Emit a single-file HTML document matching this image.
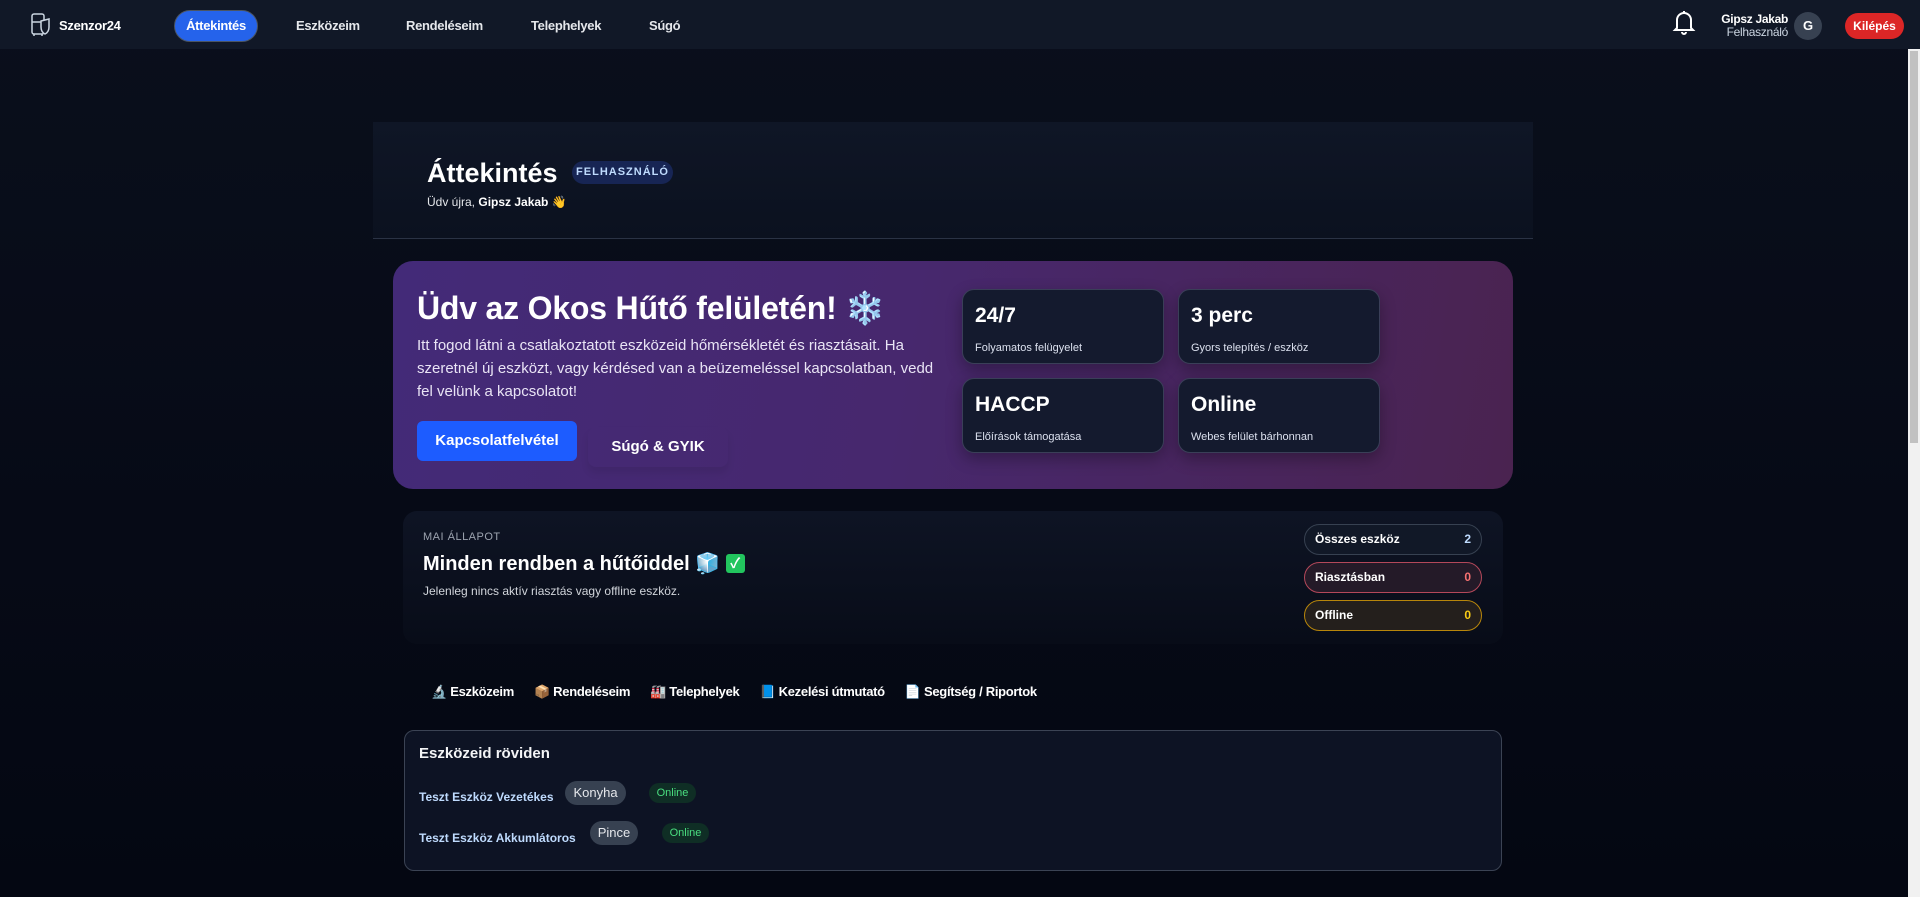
<!DOCTYPE html>
<html><head><meta charset="utf-8"><style>
*{box-sizing:border-box;margin:0;padding:0}
body{width:1920px;height:897px;overflow:hidden;background:linear-gradient(180deg,#0a0f1c 0%,#060a16 60%,#040712 100%);font-family:"Liberation Sans","Noto Sans CJK JP",sans-serif;color:#fff;position:relative}
.nav{position:absolute;left:0;top:0;width:1920px;height:49px;background:#111827}
.nav .t{position:absolute;font-size:13px;font-weight:bold;color:#e5e7eb;top:18px;letter-spacing:-0.3px}
.pill{position:absolute;left:174px;top:10px;width:84px;height:32px;border-radius:16px;background:#2563eb;border:1px solid #4b5563;font-size:13px;font-weight:bold;text-align:center;line-height:30px;letter-spacing:-0.3px}
.scroll{position:absolute;left:1908px;top:49px;width:12px;height:848px;background:#f1f1f1}
.scroll div{position:absolute;left:2px;top:2px;width:8px;height:392px;background:#c1c1c1}
.head{position:absolute;left:373px;top:122px;width:1160px;height:117px;background:linear-gradient(180deg,#0f1626,#0b111f);border-bottom:1px solid #2a3244}
.hero{position:absolute;left:393px;top:261px;width:1120px;height:228px;border-radius:20px;background:linear-gradient(100deg,#432a78 0%,#47286e 45%,#4a2350 100%)}
.card{position:absolute;width:202px;height:75px;border-radius:12px;background:#141a2e;border:1px solid #3a3f58;box-shadow:0 6px 16px rgba(0,0,0,.3)}
.card b{position:absolute;left:12px;top:14px;font-size:21px}
.card span{position:absolute;left:12px;top:52px;font-size:11px;color:#dbe0ee}
.status{position:absolute;left:403px;top:511px;width:1100px;height:133px;border-radius:14px;background:linear-gradient(180deg,#0e1424,#080c18)}
.sp{position:absolute;left:901px;width:178px;height:31px;border-radius:16px;font-size:12px;font-weight:bold;padding:0 10px;line-height:29px}
.sp i{float:right;font-style:normal}
.dev{position:absolute;left:404px;top:730px;width:1098px;height:141px;border-radius:10px;background:#0d1324;border:1px solid #3b4354}
.tag{position:absolute;border-radius:12px;font-size:13px}
</style></head><body>
<div class="nav">
 <svg style="position:absolute;left:30px;top:12px" width="22" height="26" viewBox="0 0 22 26" fill="none" stroke="#cbd5e1" stroke-width="1.5"><rect x="2" y="2" width="12" height="20" rx="2"/><line x1="2" y1="10" x2="14" y2="10"/><path d="M11 9 L19 7 L19 15 Q19 20 15 22 Q11 20 11 15Z" fill="#111827"/><line x1="4" y1="22" x2="4" y2="24"/><line x1="12" y1="22" x2="12" y2="24"/></svg>
 <div class="t" style="left:59px;color:#fff">Szenzor24</div>
 <div class="pill">Áttekintés</div>
 <div class="t" style="left:296px">Eszközeim</div>
 <div class="t" style="left:406px">Rendeléseim</div>
 <div class="t" style="left:531px">Telephelyek</div>
 <div class="t" style="left:649px">Súgó</div>
 <svg style="position:absolute;left:1672px;top:8px" width="24" height="28" viewBox="0 0 24 28" fill="none" stroke="#fff" stroke-width="2"><path d="M5 20 V12 a7 7 0 0 1 14 0 V20 L21 22 H3 Z"/><path d="M10 24 a2 2 0 0 0 4 0"/><line x1="12" y1="3" x2="12" y2="5"/></svg>
 <div style="position:absolute;right:132px;top:13px;text-align:right;font-size:12px;line-height:13px;letter-spacing:-0.3px"><b>Gipsz Jakab</b><br><span style="color:#cbd5e1">Felhasználó</span></div>
 <div style="position:absolute;left:1794px;top:12px;width:28px;height:28px;border-radius:50%;background:#374151;font-size:13px;font-weight:bold;text-align:center;line-height:28px">G</div>
 <div style="position:absolute;left:1845px;top:13px;width:59px;height:26px;border-radius:13px;background:#dc2626;font-size:12px;font-weight:bold;text-align:center;line-height:26px">Kilépés</div>
</div>
<div class="scroll"><div></div></div>
<div class="head">
 <div style="position:absolute;left:54px;top:36px;font-size:27px;font-weight:bold">Áttekintés</div>
 <div style="position:absolute;left:199px;top:39px;width:101px;height:23px;border-radius:12px;background:#172554;color:#bfdbfe;font-size:11px;font-weight:bold;letter-spacing:1px;text-align:center;line-height:23px">FELHASZNÁLÓ</div>
 <div style="position:absolute;left:54px;top:73px;font-size:12px;color:#e5e7eb">Üdv újra, <b style="color:#fff">Gipsz Jakab</b> 👋</div>
</div>
<div class="hero">
 <div style="position:absolute;left:24px;top:28px;font-size:32px;font-weight:bold;letter-spacing:-0.2px">Üdv az Okos Hűtő felületén! <span style="color:#38bdf8">❄️</span></div>
 <div style="position:absolute;left:24px;top:73px;width:520px;font-size:15px;line-height:23px;color:#e9e4f5">Itt fogod látni a csatlakoztatott eszközeid hőmérsékletét és riasztásait. Ha szeretnél új eszközt, vagy kérdésed van a beüzemeléssel kapcsolatban, vedd fel velünk a kapcsolatot!</div>
 <div style="position:absolute;left:24px;top:160px;width:160px;height:40px;border-radius:6px;background:#1d5cff;font-size:15px;font-weight:bold;text-align:center;line-height:40px">Kapcsolatfelvétel</div>
 <div style="position:absolute;left:195px;top:166px;width:140px;height:40px;border-radius:8px;box-shadow:0 6px 8px rgba(0,0,0,.08);font-size:15px;font-weight:bold;text-align:center;line-height:40px">Súgó &amp; GYIK</div>
 <div class="card" style="left:569px;top:28px"><b>24/7</b><span>Folyamatos felügyelet</span></div>
 <div class="card" style="left:785px;top:28px"><b>3 perc</b><span>Gyors telepítés / eszköz</span></div>
 <div class="card" style="left:569px;top:117px"><b>HACCP</b><span>Előírások támogatása</span></div>
 <div class="card" style="left:785px;top:117px"><b>Online</b><span>Webes felület bárhonnan</span></div>
</div>
<div class="status">
 <div style="position:absolute;left:20px;top:20px;font-size:11px;color:#9ca3af;letter-spacing:.5px">MAI ÁLLAPOT</div>
 <div style="position:absolute;left:20px;top:40px;font-size:20px;font-weight:bold">Minden rendben a hűtőiddel 🧊 <span style="display:inline-block;width:19px;height:19px;background:#22c55e;border-radius:3px;font-size:14px;text-align:center;line-height:19px;vertical-align:2px">✓</span></div>
 <div style="position:absolute;left:20px;top:73px;font-size:12px;color:#d1d5db">Jelenleg nincs aktív riasztás vagy offline eszköz.</div>
 <div class="sp" style="top:13px;background:#111827;border:1px solid #374151">Összes eszköz<i style="color:#bfdbfe">2</i></div>
 <div class="sp" style="top:51px;background:#241a28;border:1px solid #b4485a">Riasztásban<i style="color:#f87171">0</i></div>
 <div class="sp" style="top:89px;background:#241f1c;border:1px solid #b8860b">Offline<i style="color:#facc15">0</i></div>
</div>
<div style="position:absolute;left:431px;top:684px;font-size:13px;font-weight:bold;letter-spacing:-0.3px">
 <span>🔬 Eszközeim</span><span style="margin-left:20px">📦 Rendeléseim</span><span style="margin-left:20px">🏭 Telephelyek</span><span style="margin-left:20px">📘 Kezelési útmutató</span><span style="margin-left:20px">📄 Segítség / Riportok</span>
</div>
<div class="dev">
 <div style="position:absolute;left:14px;top:14px;font-size:15px;font-weight:bold;color:#f3f4f6">Eszközeid röviden</div>
 <div style="position:absolute;left:14px;top:59px;font-size:12px;font-weight:bold;color:#bfdbfe">Teszt Eszköz Vezetékes</div>
 <div class="tag" style="left:160px;top:50px;width:61px;height:24px;background:#374151;color:#e5e7eb;text-align:center;line-height:24px">Konyha</div>
 <div class="tag" style="left:244px;top:52px;width:47px;height:20px;background:#0f2e25;color:#4ade80;font-size:11px;text-align:center;line-height:20px">Online</div>
 <div style="position:absolute;left:14px;top:100px;font-size:12px;font-weight:bold;color:#bfdbfe">Teszt Eszköz Akkumlátoros</div>
 <div class="tag" style="left:185px;top:90px;width:48px;height:24px;background:#374151;color:#e5e7eb;text-align:center;line-height:24px">Pince</div>
 <div class="tag" style="left:257px;top:92px;width:47px;height:20px;background:#0f2e25;color:#4ade80;font-size:11px;text-align:center;line-height:20px">Online</div>
</div>
</body></html>
